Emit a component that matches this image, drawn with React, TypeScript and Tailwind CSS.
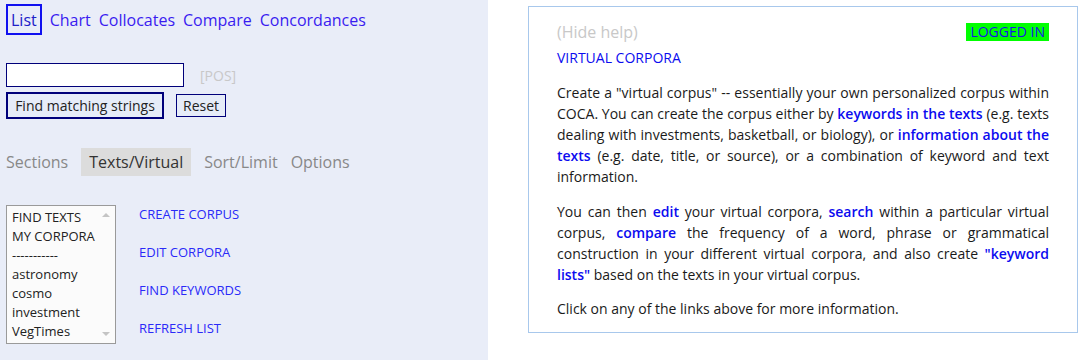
import React from 'react';

const navItems = ['Chart', 'Collocates', 'Compare', 'Concordances'];
const listItems = ['FIND TEXTS', 'MY CORPORA', '-----------', 'astronomy', 'cosmo', 'investment', 'VegTimes'];
const actions = ['CREATE CORPUS', 'EDIT CORPORA', 'FIND KEYWORDS', 'REFRESH LIST'];

const Link: React.FC<{ children: React.ReactNode }> = ({ children }) => (
  <span className="text-[#0b0bef] font-semibold">{children}</span>
);

export default function App() {
  return (
    <div className="flex w-[1085px] h-[360px] bg-white font-['Open_Sans',sans-serif] overflow-hidden">
      {/* left search panel */}
      <div className="w-[488px] shrink-0 bg-[#e9edf8] pl-[6px] pt-[4px]">
        <div className="flex items-center gap-[8px] text-[16px] leading-none">
          <span className="border-2 border-[#1010f0] px-[3px] h-[31px] flex items-center text-[#2020c8]">List</span>
          {navItems.map((n) => (
            <span key={n} className="text-[#3a1cf0]">{n}</span>
          ))}
        </div>

        <div className="mt-[28px] flex items-center">
          <div className="w-[178px] h-[24px] bg-white border border-[#00007a]" />
          <span className="ml-[16px] text-[14px] text-[#c8c8c8]">[POS]</span>
        </div>
        <div className="mt-[5px] flex items-center">
          <button className="w-[158px] h-[27px] border-2 border-[#00007a] bg-[#e6ecf8] text-[14px] text-[#222] leading-none">
            Find matching strings
          </button>
          <button className="ml-[12px] w-[50px] h-[23px] border border-[#00007a] bg-[#e6ecf8] text-[14px] text-[#222] leading-none">
            Reset
          </button>
        </div>

        <div className="mt-[29px] flex items-center text-[16px] leading-[22px] text-[#888]">
          <span className="py-[3px]">Sections</span>
          <span className="ml-[13px] bg-[#dcdcdc] px-[8px] py-[3px] text-[#333]">Texts/Virtual</span>
          <span className="ml-[13px] py-[3px]">Sort/Limit</span>
          <span className="ml-[13px] py-[3px]">Options</span>
        </div>

        <div className="mt-[29px] flex">
          <div className="relative w-[110px] h-[139px] border border-[#9a9a9a] bg-[#fbfbfb] pl-[5px] pt-[2px] text-[13px] leading-[19px] text-[#222]">
            {listItems.map((i) => (
              <div key={i}>{i}</div>
            ))}
            <span className="absolute right-[5px] top-[7px] w-0 h-0 border-l-[4px] border-r-[4px] border-b-[4px] border-l-transparent border-r-transparent border-b-[#c4c4c4]" />
            <span className="absolute right-[5px] bottom-[7px] w-0 h-0 border-l-[4px] border-r-[4px] border-t-[4px] border-l-transparent border-r-transparent border-t-[#c4c4c4]" />
          </div>
          <div className="ml-[23px] pt-[1px] flex flex-col gap-[21px] text-[13px] leading-[17px] text-[#2a2af8]">
            {actions.map((a) => (
              <span key={a}>{a}</span>
            ))}
          </div>
        </div>
      </div>

      {/* help box */}
      <div className="ml-[40px] mt-[6px] w-[550px] h-[327px] border border-[#a8c8ec] px-[28px] pt-[13px] text-[14px] text-[#1a1a1a]">
        <div className="flex items-center justify-between">
          <span className="text-[16px] text-[#c8c8c8]">(Hide help)</span>
          <span className="bg-[#00ff00] text-[#1515e8] text-[14px] leading-[18px] px-[4px]">LOGGED IN</span>
        </div>
        <div className="mt-[4px] text-[#0b0bef] leading-[20px]">VIRTUAL CORPORA</div>
        <p className="mt-[14px] leading-[21px] text-justify">
          Create a "virtual corpus" -- essentially your own personalized corpus within COCA. You can create the corpus either by{' '}
          <Link>keywords in the texts</Link> (e.g. texts dealing with investments, basketball, or biology), or{' '}
          <Link>information about the texts</Link> (e.g. date, title, or source), or a combination of keyword and text information.
        </p>
        <p className="mt-[14px] leading-[21px] text-justify">
          You can then <Link>edit</Link> your virtual corpora, <Link>search</Link> within a particular virtual corpus,{' '}
          <Link>compare</Link> the frequency of a word, phrase or grammatical construction in your different virtual corpora, and also create{' '}
          <Link>"keyword lists"</Link> based on the texts in your virtual corpus.
        </p>
        <p className="mt-[13px] leading-[21px]">Click on any of the links above for more information.</p>
      </div>
    </div>
  );
}
